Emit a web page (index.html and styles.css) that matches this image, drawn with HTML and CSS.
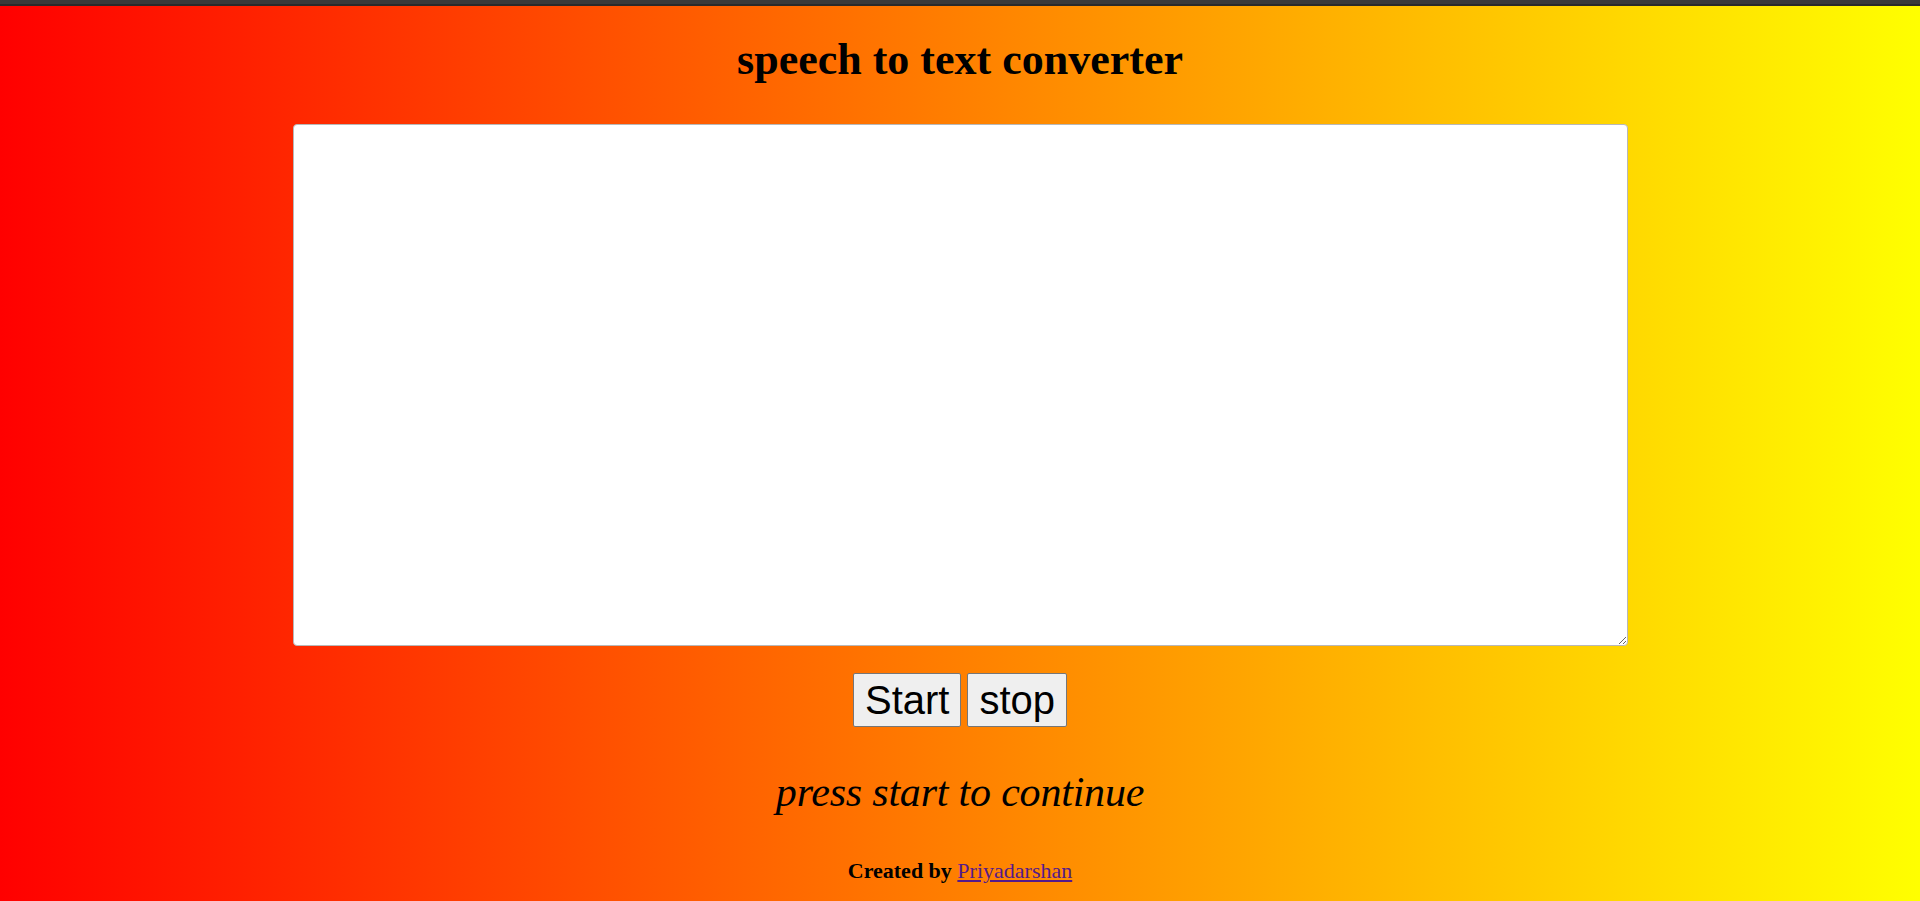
FILE: index.html
```html
<!DOCTYPE html>
<html>
<head>
<meta charset="utf-8">
<title>speech to text converter</title>
<link rel="stylesheet" href="styles.css">
</head>
<body>
<div class="topbar"></div>
<main class="page">
  <h1 class="title">speech to text converter</h1>
  <textarea class="output"></textarea>
  <div class="controls">
    <button class="btn">Start</button>
    <button class="btn">stop</button>
  </div>
  <p class="status">press start to continue</p>
  <p class="credit">Created by <a href="#" class="credit-link">Priyadarshan</a></p>
</main>
</body>
</html>
```

FILE: styles.css
```css
html, body {
  margin: 0;
  padding: 0;
  height: 100%;
}
body {
  background: linear-gradient(to right, #ff0000, #ffff00);
  font-family: "Liberation Serif", "Times New Roman", serif;
  color: #000;
  overflow: hidden;
}
.topbar {
  height: 4px;
  background: #3a3a3a;
  border-bottom: 2px solid #2a2a2a;
}
.page {
  display: flex;
  flex-direction: column;
  align-items: center;
}
.title {
  margin: 29px 0 0;
  font-size: 44px;
  line-height: 50px;
  font-weight: bold;
}
.output {
  margin-top: 39px;
  width: 1335px;
  height: 522px;
  box-sizing: border-box;
  border: 1px solid #b8b8b8;
  border-radius: 4px;
  background: #fff;
  resize: both;
  padding: 2px;
  font-family: "Liberation Mono", monospace;
}
.controls {
  margin-top: 27px;
  display: flex;
  gap: 6px;
}
.btn {
  font-family: "Liberation Sans", Arial, sans-serif;
  font-size: 40px;
  line-height: 46px;
  padding: 3px 11px;
  border: 1px solid #767676;
  border-radius: 2px;
  background: #efefef;
  color: #000;
}
.status {
  margin: 41px 0 0;
  font-size: 42px;
  line-height: 48px;
  font-style: italic;
  letter-spacing: -0.2px;
}
.credit {
  margin: 42px 0 0;
  font-size: 22px;
  line-height: 26px;
  font-weight: bold;
}
.credit-link {
  font-weight: normal;
  color: #551a8b;
}
```
